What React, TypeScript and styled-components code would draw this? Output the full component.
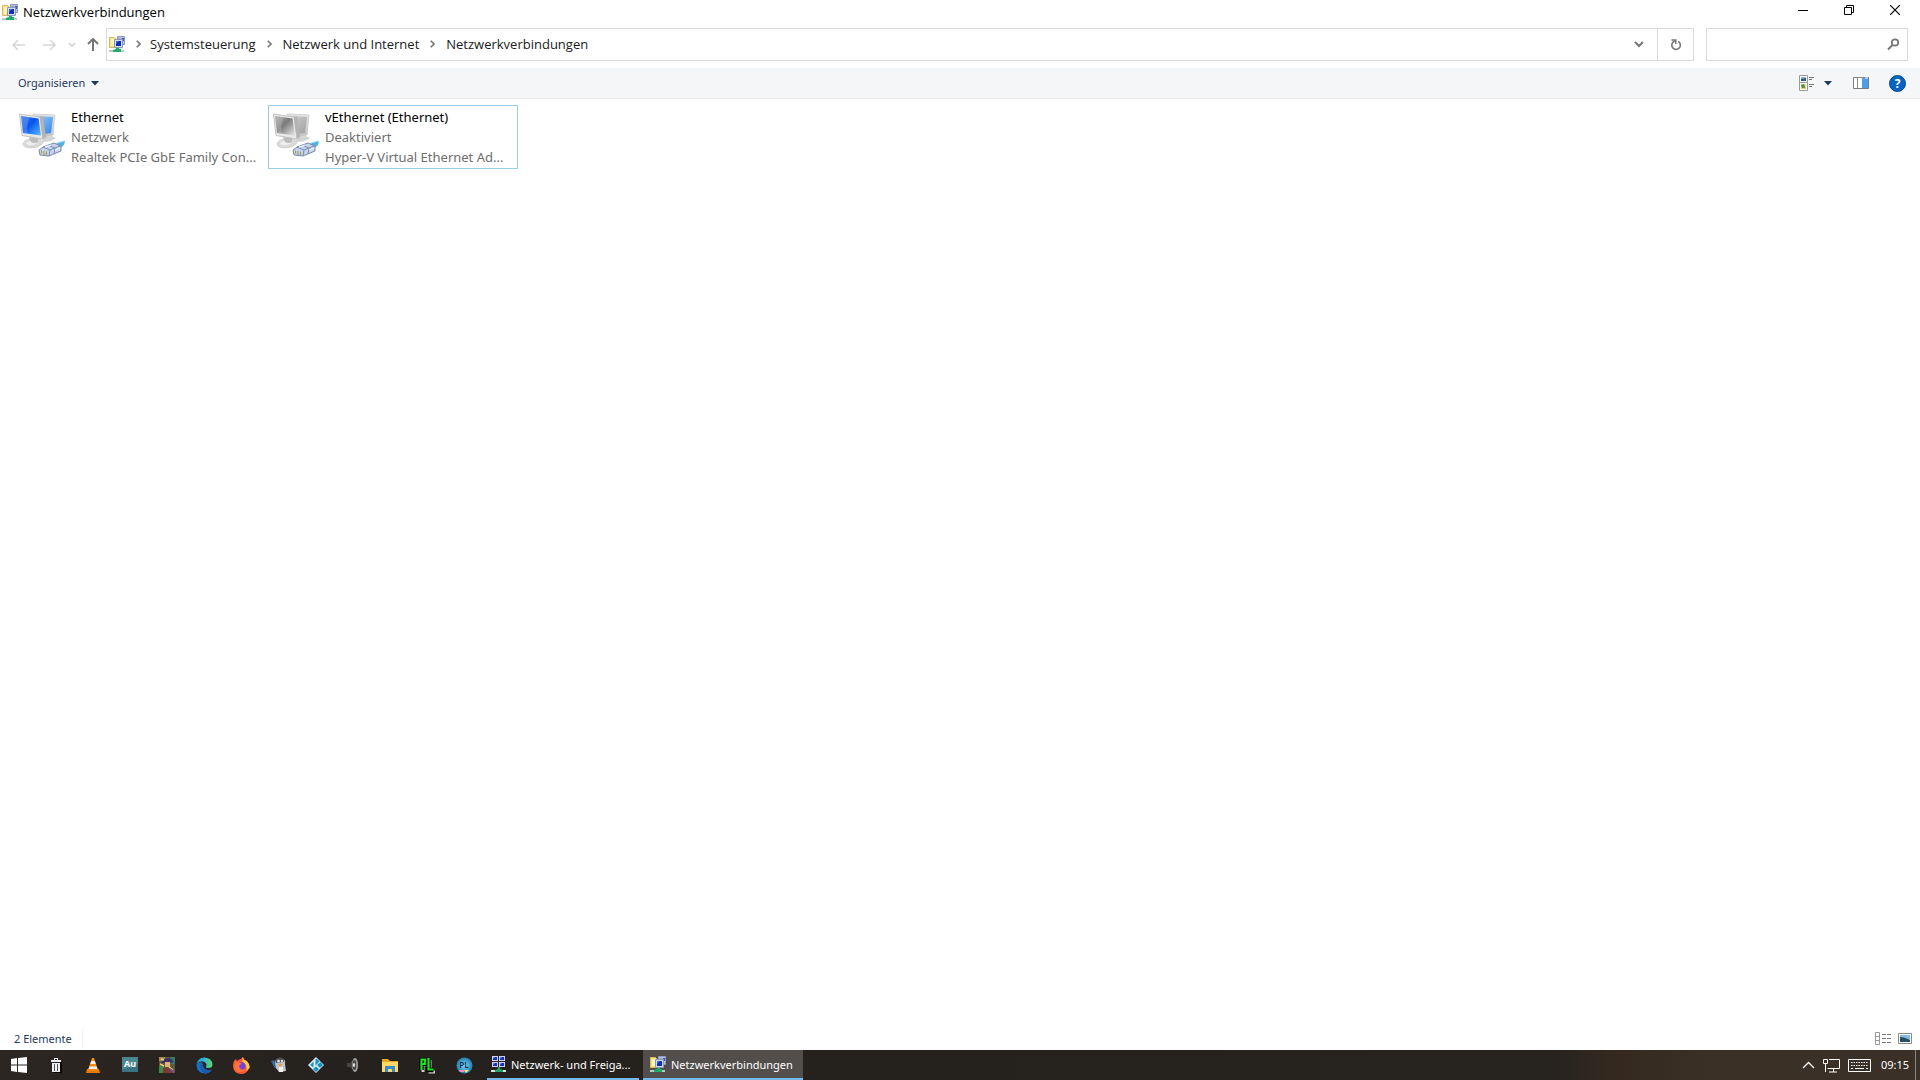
import React from 'react';
import styled, { createGlobalStyle, css } from 'styled-components';

const uiFont = '"Open Sans", "Noto Sans", "Segoe UI", sans-serif';
const listFont = '"Noto Sans", "Open Sans", "Segoe UI", sans-serif';

const Global = createGlobalStyle`
  * { box-sizing: border-box; }
  body { margin: 0; background: #fff; }
  body, button, input { font-family: ${listFont}; }
  button { border: 0; padding: 0; margin: 0; background: none; color: inherit; }
  svg { display: block; flex: none; }
`;

const Window = styled.div`
  min-height: 100vh;
  display: flex;
  flex-direction: column;
  background: #fff;
  color: #000;
  font-size: 13px;
`;

const TitleBar = styled.header`
  height: 24px;
  display: flex;
  align-items: center;
  padding: 0 2px;
`;

const Title = styled.h1`
  margin: 0;
  padding-left: 4px;
  flex: 1;
  font-family: ${uiFont};
  font-size: 13px;
  font-weight: 400;
  line-height: 24px;
`;

const CaptionButton = styled.button`
  width: 46px;
  height: 20px;
  align-self: flex-start;
  display: grid;
  place-items: center;
`;

const AddressRow = styled.nav`
  display: flex;
  align-items: center;
  padding: 4px 12px 7px 0;
  font-family: ${uiFont};
`;

const NavButtons = styled.div`
  width: 106px;
  display: flex;
  align-items: center;
`;

const NavButton = styled.button<{ $w: number }>`
  width: ${p => p.$w}px;
  height: 32px;
  display: grid;
  place-items: center;
`;

const AddressBox = styled.div`
  flex: 1;
  height: 33px;
  display: flex;
  align-items: center;
  border: 1px solid #d9d9d9;
  padding-left: 2px;
`;

const Crumbs = styled.ol`
  flex: 1;
  display: flex;
  align-items: center;
  list-style: none;
  margin: 0;
  padding: 0 0 1px;
`;

const Crumb = styled.li`
  display: flex;
  align-items: center;
  &:first-child > span { width: 24px; }
`;

const Separator = styled.span`
  width: 27px;
  display: grid;
  place-items: center;
`;

const CrumbLink = styled.a`
  color: #1a1a1a;
  text-decoration: none;
  line-height: 20px;
`;

const BoxButton = styled.button<{ $divided?: boolean }>`
  width: 36px;
  height: 31px;
  display: grid;
  place-items: center;
  ${p => p.$divided && css`border-left: 1px solid #d9d9d9;`}
`;

const SearchBox = styled.label`
  width: 202px;
  height: 33px;
  margin-left: 12px;
  display: flex;
  align-items: center;
  border: 1px solid #d9d9d9;
  padding-right: 7px;
`;

const SearchInput = styled.input`
  flex: 1;
  min-width: 0;
  height: 100%;
  border: 0;
  outline: 0;
  background: transparent;
`;

const CommandBar = styled.div`
  height: 31px;
  display: flex;
  align-items: center;
  justify-content: space-between;
  padding: 0 14px 0 18px;
  background: #f4f6f8;
  border-bottom: 1px solid #e6e8ea;
  color: #1e395b;
`;

const Organize = styled.button`
  display: flex;
  align-items: center;
  gap: 6px;
  font-size: 11px;
  line-height: 20px;
`;

const Commands = styled.div`
  display: flex;
  align-items: center;
`;

const Command = styled.button<{ $gap?: number }>`
  margin-left: ${p => p.$gap ?? 0}px;
`;

const Content = styled.main`
  flex: 1;
  padding: 6px 14px;
`;

const Connections = styled.ul`
  display: flex;
  flex-wrap: wrap;
  gap: 4px;
  margin: 0;
  padding: 0;
  list-style: none;
`;

const Connection = styled.li<{ $focused?: boolean }>`
  width: 250px;
  height: 64px;
  display: flex;
  border: 1px solid ${p => (p.$focused ? '#99cde6' : 'transparent')};
  padding: 1px 0 0 3px;
`;

const Lines = styled.div`
  padding-left: 5px;
  white-space: nowrap;
`;

const Line = styled.p<{ $muted?: boolean }>`
  margin: 0;
  line-height: 20px;
  color: ${p => (p.$muted ? '#6d6d6d' : '#000')};
`;

const StatusBar = styled.footer`
  height: 25px;
  display: flex;
  align-items: center;
  justify-content: space-between;
  padding: 2px 8px 0 14px;
  color: #1e395b;
  font-size: 11px;
`;

const Count = styled.span`
  line-height: 20px;
  padding-right: 10px;
  border-right: 1px solid #f3f3f3;
`;

const ViewModes = styled.div`
  display: flex;
  gap: 7px;
`;

const Taskbar = styled.footer`
  height: 30px;
  display: flex;
  background: linear-gradient(90deg, #2c2622 0%, #24211e 20%, #26231e 60%, #27231f 81%, #35291f 84%, #3a3026 89%, #3b3027 100%);
  color: #fff;
  font-size: 11px;
`;

const Launchers = styled.div`
  width: 483px;
  display: flex;
`;

const Launcher = styled.button`
  flex: 1;
  display: grid;
  place-items: center;
`;

const Tasks = styled.div`
  flex: 1;
  display: flex;
  gap: 4px;
  padding-left: 4px;
`;

const Task = styled.button<{ $active?: boolean }>`
  width: ${p => (p.$active ? 160 : 152)}px;
  display: flex;
  align-items: center;
  gap: 4px;
  padding: 0 0 0 ${p => (p.$active ? 7 : 4)}px;
  border-bottom: 2px solid #76b9ed;
  background: ${p => (p.$active ? '#514e4c' : 'transparent')};
  font-size: 11px;
  white-space: nowrap;
`;

const Tray = styled.div`
  display: flex;
  align-items: center;
  gap: 8px;
  padding-right: 4px;
`;

const TrayButton = styled.button``;

const Clock = styled.time`
  height: 30px;
  line-height: 29px;
  padding: 0 6px 0 2px;
  border-right: 1px solid #8a827d;
`;

const FolderNetIcon = () => (
  <svg width="17" height="17" viewBox="0 0 17 17">
    <path d="M.5 1.500h5l1 1v9h-6z" fill="#f5e28c" stroke="#d5bc57" />
    <path d="M2 3h3v7H2z" fill="#fff4b6" />
    <path d="M8.500 .5h7v8h-3V3h-4z" fill="#b5bedb" stroke="#8e9bc5" />
    <path d="M13 2h2v3h-2z" fill="#3c55c5" />
    <path d="M5.500 3.500h8v8h-8z" fill="#d5dcf0" stroke="#8a96bb" />
    <path d="M7 5h5v5H7z" fill="#1230ae" />
    <path d="M7 5h3L7 8z" fill="#3f68e4" />
    <path d="M0 14h15v2H0z" fill="#b9c9c3" />
    <path d="M7 12h3v1h2v3H4v-2l3-1z" fill="#22aa68" />
  </svg>
);

const CenterIcon = () => (
  <svg width="16" height="17" viewBox="0 0 16 17">
    {[[1, 0], [8, 0], [1, 6], [8, 6]].map(([x, y]) => (
      <g key={`${x}-${y}`}>
        <rect x={x} y={y} width="6" height="5" fill="#c7d2f5" />
        <path d={`M${x + 1} ${y + 1}h4v3h-4z`} fill="#1b2eb5" />
        <path d={`M${x + 1} ${y + 1}h2l-2 2z`} fill="#7587e8" />
      </g>
    ))}
    <path d="M0 14h15v2H0z" fill="#d8e3dd" />
    <path d="M7 11h2v2l3 1v2H4v-2l3-1z" fill="#20a765" />
  </svg>
);

const AdapterIcon = ({ off = false }: { off?: boolean }) => {
  const id = off ? 'off' : 'on';
  return (
    <svg width="48" height="54" viewBox="0 0 48 54">
      <defs>
        <linearGradient id={`${id}-screen`} x1="0" y1="0" x2="1" y2="1">
          <stop offset="0" stopColor={off ? '#a8a8a8' : '#2f70e8'} />
          <stop offset=".45" stopColor={off ? '#7b7b7b' : '#0755ed'} />
          <stop offset="1" stopColor={off ? '#e8e8e8' : '#5cbcff'} />
        </linearGradient>
        <linearGradient id={`${id}-back`} x1="0" y1="0" x2="1" y2="1">
          <stop offset="0" stopColor={off ? '#d0d0d0' : '#a4ccf6'} />
          <stop offset="1" stopColor={off ? '#a0a0a0' : '#2c86ec'} />
        </linearGradient>
        <linearGradient id={`${id}-case`} x1="0" y1="0" x2="0" y2="1">
          <stop offset="0" stopColor="#e4e4e4" />
          <stop offset="1" stopColor="#c2c2c2" />
        </linearGradient>
      </defs>
      <path d="M24 30l10-1 4 2q-5 4-13 4z" fill="#d4d4d4" />
      <path d="M15 7l22 1-2 20-9 2z" fill={`url(#${id}-case)`} stroke="#cacaca" strokeWidth=".8" />
      <path d="M17 9l18 1-2 16-7 1z" fill={`url(#${id}-back)`} />
      <path d="M5 37q1-4 7-5l8 0q7 1 4 5-4 4-11 4-7 0-8-4z" fill="#dadada" stroke="#c6c6c6" strokeWidth=".7" />
      <path d="M8 36q5-4 12-1-2 3-6 3-5 1-6-2z" fill="#eeeeee" />
      <path d="M11 30l9 1v4q-4 2-7 0z" fill="#bcbcbc" />
      <path d="M1.500 7l20.500 3 3 22-21-3.500z" fill="#e9e9e9" stroke="#b8b8b8" strokeWidth=".8" />
      <path d="M22 10l3-1 3 21-3 2z" fill="#b3b3b3" />
      <path d="M3 9l17.500 2.500 2.500 17L5 26z" fill={`url(#${id}-screen)`} />
      <path d="M3 9l9 1.200Q8 18 9.500 26.500L5 26z" fill="#fff" opacity=".2" />
      <path d="M35 39q3-4 12-5l-1 4-6 5z" fill="#51b5df" />
      <path d="M36 38q4-3 10-4" fill="none" stroke="#a9e4f8" />
      <path d="M21 43l4-3 11-4 7 3v5l-12 5-9-1z" fill="#c6d4ec" stroke="#6d7fa8" strokeWidth=".9" />
      <path d="M25 40l7 3 10-4M32 43l-1 6M30 38l7 3-1 6" fill="none" stroke="#7084b0" strokeWidth=".9" />
      <path d="M23.500 43.500v3M26 44v4M28.500 44.500v3.500" fill="none" stroke="#a79b5d" strokeWidth="1.200" />
      <path d="M27 40l6-2M37 43l5-2" stroke="#f4f8ff" strokeWidth="1.200" />
    </svg>
  );
};

const Caret = () => (
  <svg width="8" height="5" viewBox="0 0 8 5"><path d="M0 0h8L4 4.500z" fill="#1e395b" /></svg>
);

const Arrow = ({ dir, color }: { dir: 'left' | 'right' | 'up'; color: string }) => {
  const turn = { left: 0, right: 180, up: 90 }[dir];
  return (
    <svg width="14" height="14" viewBox="0 0 14 14">
      <g transform={`rotate(${turn} 7 7)`} fill="none" stroke={color} strokeWidth={dir === 'up' ? 2 : 1.5}>
        <path d="M1 7h12M6 2L1 7l5 5" />
      </g>
    </svg>
  );
};

const launchers: [string, React.ReactNode][] = [
  ['Start', <svg width="16" height="16" viewBox="0 0 16 16"><path d="M0 2l6-1v6.500H0zM7 .9L16 0v7.500H7zM0 8.500h6V15l-6-1zM7 8.500h9V16l-9-1z" fill="#fff" /></svg>],
  ['Papierkorb', <svg width="16" height="16" viewBox="0 0 16 16"><path d="M13 5v11H5" fill="none" stroke="#000" strokeWidth="1.500" /><path d="M6 1h4v2h3v2h-1v10H4V5H3V3h3z" fill="#f0f0f0" /><path d="M7 2h2v1H7zM4 5h8v1H4z" fill="#222" /><path d="M6.500 7v7M9.500 7v7" stroke="#555" /></svg>],
  ['VLC', <svg width="16" height="17" viewBox="0 0 16 17"><path d="M2 12h12l1 4H1z" fill="#e87b08" /><path d="M7 1h2l4 12q-5 2-10 0z" fill="#f58a14" /><path d="M6.200 4h3.600l1 3H5.200zM4.400 9.500h7.200l.8 2.500H3.600z" fill="#eee" /></svg>],
  ['Audition', <svg width="16" height="16" viewBox="0 0 16 16"><rect width="16" height="15" fill="#397480" /><path d="M0 0h16v7L0 13z" fill="#4b8791" /><text x="8" y="10" fill="#fff" fontSize="9" fontWeight="700" textAnchor="middle">Au</text></svg>],
  ['Spiel', <svg width="17" height="17" viewBox="0 0 17 17"><rect width="16" height="16" fill="#5c5a3c" /><path d="M0 0h6v4H0z" fill="#a68a4e" /><path d="M11 0h5v7h-5z" fill="#3d7a62" /><path d="M0 9h5v7H0z" fill="#3a8a4b" /><path d="M2 6l3-4 6-1 4 4-5 1z" fill="#3b2c6d" /><path d="M6 5h5v5H6z" fill="#e5b07a" /><path d="M4 11l7-1 3 6H4z" fill="#7c3b2d" /><path d="M1 7l4 2M10 10l4 3M2 2l3 1" stroke="#ead26e" strokeWidth="1.500" /><path d="M11 12l4 3" stroke="#7750a4" strokeWidth="2" /></svg>],
  ['Edge', <svg width="17" height="17" viewBox="0 0 17 17"><defs><linearGradient id="edge" x1="0" x2="1"><stop stopColor="#1c95dd" /><stop offset=".5" stopColor="#2fb9d5" /><stop offset="1" stopColor="#65d65a" /></linearGradient></defs><path d="M.5 8Q1 16.500 9 16.500q4.500 0 7-4-3 1-6 0-3-1.500-3-4.500 0-2-2-2.500Q2 5 .5 8z" fill="#1473c8" /><path d="M4 7q-1 7 5 9.500 4.500-.5 7-4-3 1-6 0-3-1.500-3-4.500z" fill="#1e5bb0" /><path d="M.5 8Q1.500 .5 8.500 .5q7.500.5 8 7Q16.500 11 12.500 11q-3 0-2.500-1.500.8-1 .5-2Q9.500 4.500 6 4.500 2 4.500 .5 8z" fill="url(#edge)" /></svg>],
  ['Firefox', <svg width="17" height="17" viewBox="0 0 17 17"><path d="M1 4l2-2 1 2q2-2 4-2l2-2q1 3 4 4 3 4 2 7-2 6-8 6Q0 16 0 9q0-3 1-5z" fill="#ff5738" /><path d="M9.500 0q1 3 4 4 4 4 3 7l-3 3q1-7-4-8z" fill="#ffca3c" /><circle cx="8.500" cy="9" r="4" fill="#7542dc" /><path d="M2 5q4-1 7 2-3 0-3 3 2 4 7 2-2 4-7 3-6-2-4-10z" fill="#ff7337" /></svg>],
  ['Pinguin', <svg width="16" height="16" viewBox="0 0 16 16"><path d="M0 4l5-1 3 5-1 5-4-3z" fill="#2f6b9c" /><path d="M4 5q1-4 6-4 5 1 4 6l1 7-7 1-3-4z" fill="#c4c4c4" /><path d="M4 3l5-3 4 2v3l-8 1z" fill="#4a4a4a" /><circle cx="7.500" cy="4" r="1.500" fill="#ddd" /><circle cx="11" cy="4" r="1.300" fill="#ddd" /><path d="M7 7h4l-2 3z" fill="#e99b3b" /><path d="M8 10h4v5H8z" fill="#f2f2f2" /></svg>],
  ['Kodi', <svg width="16" height="16" viewBox="0 0 16 16"><path d="M8 0l8 8-8 8-8-8z" fill="#d8eef5" /><path d="M8.500 1.500l3 3-4 4V2.500zM5.500 4.500v6L2 8zM12.500 5l2.500 3-3 3-3-3zM8 9.500l3 2.500-3 3-3-3z" fill="#1b8fbd" /></svg>],
  ['Lautsprecher', <svg width="14" height="16" viewBox="0 0 14 16"><path d="M1 6h3l5-5v14l-5-5H1z" fill="#454545" /><ellipse cx="9" cy="8" rx="3" ry="7" fill="#a2a2a2" /><ellipse cx="8.500" cy="8" rx="1.900" ry="5" fill="#454545" /><ellipse cx="8" cy="8" rx="1.200" ry="2" fill="#ddd" /></svg>],
  ['Explorer', <svg width="16" height="15" viewBox="0 0 16 15"><path d="M0 1h6l2 2h8v11H0z" fill="#e8a522" /><path d="M0 4h16v10H0z" fill="#ffd968" /><path d="M3 8h10v6h-3v-3H6v3H3z" fill="#398bc9" /></svg>],
  ['PL', <svg width="17" height="17" viewBox="0 0 17 17"><g fill="none"><path d="M4 15V3h4v5H5M11 3v12h5" stroke="#ccc" strokeWidth="3" /><path d="M2.500 13V3H6v4H3M9.500 2v11h5" stroke="#000" strokeWidth="4.500" /><path d="M2.500 13V2.500H6V7H3M9.500 1v11.500h5" stroke="#17e51c" strokeWidth="2.200" /></g></svg>],
  ['PL Player', <svg width="17" height="17" viewBox="0 0 17 17"><defs><radialGradient id="ball"><stop stopColor="#83d5f5" /><stop offset="1" stopColor="#227fac" /></radialGradient></defs><circle cx="8.500" cy="8.500" r="8" fill="url(#ball)" /><path d="M3 13h5v2H4z" fill="#ff86bb" /><path d="M8 13h5l-3 3z" fill="#eee77b" /><text x="8" y="11" fill="#08335b" fontSize="8" fontWeight="600" textAnchor="middle">PL</text></svg>],
];

const crumbs = ['Systemsteuerung', 'Netzwerk und Internet', 'Netzwerkverbindungen'];

const connections = [
  { name: 'Ethernet', state: 'Netzwerk', device: 'Realtek PCIe GbE Family Con...', off: false },
  { name: 'vEthernet (Ethernet)', state: 'Deaktiviert', device: 'Hyper-V Virtual Ethernet Ad...', off: true },
];

export default function App() {
  return (
    <Window>
      <Global />
      <TitleBar>
        <FolderNetIcon />
        <Title>Netzwerkverbindungen</Title>
        <CaptionButton aria-label="Minimieren"><svg width="10" height="10" viewBox="0 0 10 10"><path d="M0 5.500h10" stroke="#000" /></svg></CaptionButton>
        <CaptionButton aria-label="Verkleinern"><svg width="10" height="10" viewBox="0 0 10 10"><path d="M.5 2.500h7v7h-7zM2.500 2V.5h7v7H8" fill="none" stroke="#000" /></svg></CaptionButton>
        <CaptionButton aria-label="Schließen"><svg width="10" height="10" viewBox="0 0 10 10"><path d="M0 0l10 10M10 0L0 10" stroke="#000" strokeWidth="1.200" /></svg></CaptionButton>
      </TitleBar>
      <AddressRow aria-label="Adresse">
        <NavButtons>
          <NavButton $w={38} aria-label="Zurück"><Arrow dir="left" color="#d6d6d6" /></NavButton>
          <NavButton $w={22} aria-label="Vorwärts"><Arrow dir="right" color="#d6d6d6" /></NavButton>
          <NavButton $w={24} aria-label="Verlauf"><svg width="6" height="5" viewBox="0 0 6 5"><path d="M0 1l3 3 3-3" fill="none" stroke="#ccc" strokeWidth="1.300" /></svg></NavButton>
          <NavButton $w={18} aria-label="Nach oben"><Arrow dir="up" color="#757575" /></NavButton>
        </NavButtons>
        <AddressBox>
          <FolderNetIcon />
          <Crumbs>
            {crumbs.map(c => (
              <Crumb key={c}>
                <Separator><svg width="5" height="8" viewBox="0 0 5 8"><path d="M.7 .7L4 4 .7 7.300" fill="none" stroke="#777" strokeWidth="1.600" /></svg></Separator>
                <CrumbLink href="#">{c}</CrumbLink>
              </Crumb>
            ))}
          </Crumbs>
          <BoxButton aria-label="Vorherige Orte"><svg width="10" height="7" viewBox="0 0 10 7"><path d="M1 1l4 4 4-4" fill="none" stroke="#777" strokeWidth="2" /></svg></BoxButton>
          <BoxButton $divided aria-label="Aktualisieren"><svg width="12" height="12" viewBox="0 0 12 12"><path d="M8.200 2.400A4.300 4.300 0 1 1 2.600 3.600L4.800 1.600" fill="none" stroke="#777" strokeWidth="1.600" /><path d="M1.500 1h4.300v4" fill="none" stroke="#777" strokeWidth="1.500" /></svg></BoxButton>
        </AddressBox>
        <SearchBox>
          <SearchInput type="search" aria-label="Suchen" />
          <svg width="13" height="13" viewBox="0 0 13 13"><circle cx="8" cy="4.500" r="3.200" fill="none" stroke="#777" strokeWidth="1.800" /><path d="M5.500 7L1 11.500" stroke="#777" strokeWidth="2" /></svg>
        </SearchBox>
      </AddressRow>
      <CommandBar>
        <Organize>Organisieren <Caret /></Organize>
        <Commands>
          <Command aria-label="Ansicht ändern">
            <svg width="16" height="16" viewBox="0 0 16 16"><path d="M.5 .5h8v7h-8zM.5 7.500h8v8h-8z" fill="#fff" stroke="#999" /><path d="M2 2h5v4H2z" fill="#7eb8e6" /><path d="M2 4l5-1v3H2z" fill="#285b87" /><path d="M2 9h5v5H2z" fill="#e1d36d" /><path d="M2 10l3-1 1 4H3z" fill="#47914d" /><path d="M10 2.500h5M10 4.500h3M10 9.500h5M10 11.500h3" stroke="#777" /></svg>
          </Command>
          <Command $gap={9} aria-label="Weitere Optionen"><Caret /></Command>
          <Command $gap={21} aria-label="Vorschaufenster">
            <svg width="16" height="12" viewBox="0 0 16 12"><path d="M.5 .5h15v11H.5z" fill="#fff" stroke="#7b7b7b" /><path d="M0 .5h16M4.500 1v10" stroke="#888" /><path d="M9 1h6v10H9z" fill="#4ba0e8" /><path d="M12 1h3" stroke="#fff" /></svg>
          </Command>
          <Command $gap={20} aria-label="Hilfe">
            <svg width="17" height="17" viewBox="0 0 17 17"><circle cx="8.500" cy="8.500" r="8" fill="#0565c1" stroke="#034a8e" /><text x="8.500" y="13" textAnchor="middle" fontSize="12" fontWeight="700" fill="#fff">?</text></svg>
          </Command>
        </Commands>
      </CommandBar>
      <Content>
        <Connections>
          {connections.map(c => (
            <Connection key={c.name} $focused={c.off}>
              <AdapterIcon off={c.off} />
              <Lines>
                <Line>{c.name}</Line>
                <Line $muted>{c.state}</Line>
                <Line $muted>{c.device}</Line>
              </Lines>
            </Connection>
          ))}
        </Connections>
      </Content>
      <StatusBar>
        <Count>2 Elemente</Count>
        <ViewModes>
          <Command aria-label="Details"><svg width="16" height="13" viewBox="0 0 16 13"><path d="M.5 .5h4v12h-4zM.5 4.500h4M.5 8.500h4" fill="none" stroke="#999" /><path d="M7 2.500h4M12 2.500h4M7 6.500h4M12 6.500h4M7 10.500h4M12 10.500h4" stroke="#777" /></svg></Command>
          <Command aria-label="Große Symbole"><svg width="14" height="12" viewBox="0 0 14 12"><path d="M.5 .5h13v10H.5z" fill="#fff" stroke="#888" /><path d="M2 2h10v7H2z" fill="#83bce6" /><path d="M2 4q4 0 10 3v2H2z" fill="#244f61" /></svg></Command>
        </ViewModes>
      </StatusBar>
      <Taskbar>
        <Launchers>
          {launchers.map(([name, icon]) => <Launcher key={name} aria-label={name}>{icon}</Launcher>)}
        </Launchers>
        <Tasks>
          <Task><CenterIcon />Netzwerk- und Freiga...</Task>
          <Task $active><FolderNetIcon />Netzwerkverbindungen</Task>
        </Tasks>
        <Tray>
          <TrayButton aria-label="Ausgeblendete Symbole"><svg width="13" height="8" viewBox="0 0 13 8"><path d="M1 7l5.500-5.500L12 7" fill="none" stroke="#fff" strokeWidth="1.300" /></svg></TrayButton>
          <TrayButton aria-label="Netzwerk"><svg width="17" height="15" viewBox="0 0 17 15"><path d="M6 1.500h10.500v9H4.500M10.500 11v3M6 14h8M.5 1.500h4v4h-4zM2.500 6v8" fill="none" stroke="#fff" /></svg></TrayButton>
          <TrayButton aria-label="Tastatur"><svg width="23" height="13" viewBox="0 0 23 13"><path d="M.5 .5h22v12H.5z" fill="none" stroke="#fff" /><path d="M3 3.500h17M3 6.500h17" stroke="#fff" strokeDasharray="1.500 1" /><path d="M3 9.500h2M7 9.500h9M18 9.500h2" stroke="#fff" /></svg></TrayButton>
          <Clock>09:15</Clock>
        </Tray>
      </Taskbar>
    </Window>
  );
}
